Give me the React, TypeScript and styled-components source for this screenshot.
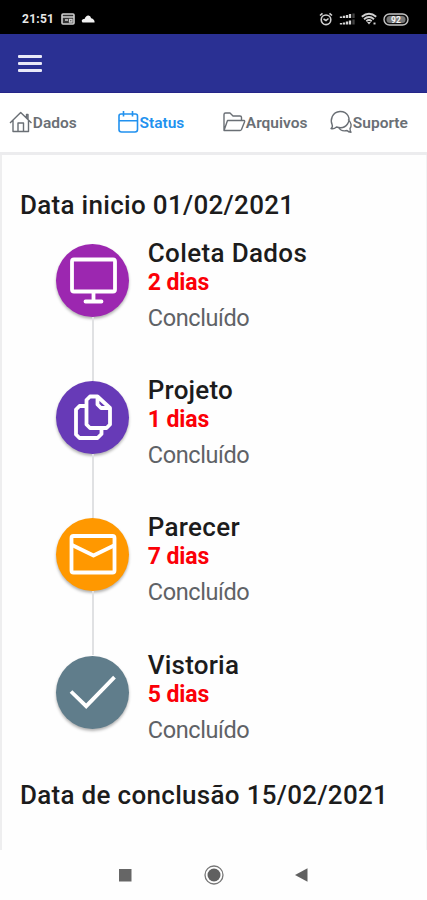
import React from "react";
import styled, { createGlobalStyle } from "styled-components";

const GlobalStyle = createGlobalStyle`
  * { box-sizing: border-box; }
  body { margin: 0; background: #fff; font-family: Roboto, "Liberation Sans", sans-serif; }
`;

const Screen = styled.div`
  width: 427px;
  height: 900px;
  display: flex;
  flex-direction: column;
  overflow: hidden;
  background: #fefefe;
`;

const StatusBar = styled.div`
  height: 34px;
  flex: none;
  background: #000;
  color: #e8e8e8;
  display: flex;
  align-items: center;
  justify-content: space-between;
  padding: 4px 18px 0 22px;
`;

const StatusGroup = styled.div<{ $gap: number }>`
  display: flex;
  align-items: center;
  gap: ${(p) => p.$gap}px;
`;

const Clock = styled.span`
  font-size: 12px;
  line-height: 14px;
  width: 32px;
  margin-right: 1px;
  letter-spacing: 0.25px;
  font-weight: 700;
`;

const AppBar = styled.header`
  height: 59px;
  flex: none;
  background: #2a3093;
  border-bottom: 1px solid #252588;
  display: flex;
  align-items: center;
  padding: 1px 0 0 18px;
`;

const MenuButton = styled.button`
  width: 24px;
  height: 17px;
  padding: 0;
  border: 0;
  background: none;
  display: flex;
  flex-direction: column;
  justify-content: space-between;
`;

const MenuLine = styled.span`
  display: block;
  width: 24px;
  height: 3px;
  border-radius: 1px;
  background: #e9e9f8;
`;

const Tabs = styled.nav`
  height: 62px;
  flex: none;
  display: grid;
  grid-template-columns: 108px 105px 107px 1fr;
  padding: 0 0 3px 9px;
  border-bottom: 3px solid #ececee;
  background: #fff;
`;

const Tab = styled.a<{ $active?: boolean }>`
  display: flex;
  align-items: center;
  height: 58px;
  font-size: 15.5px;
  font-weight: 600;
  color: ${(p) => (p.$active ? "#2191ef" : "#6a6f75")};
`;

const TabLabel = styled.span`
  padding-top: 1px;
  white-space: nowrap;
`;

const TabIcon = styled.svg<{ $pull: number }>`
  width: 24px;
  height: 24px;
  flex: none;
  margin-right: -${(p) => p.$pull}px;
  fill: none;
  stroke: currentColor;
  stroke-width: 1.4;
  stroke-linejoin: round;
`;

const Content = styled.main`
  height: 695px;
  flex: none;
  padding: 35px 0 0 18px;
  border-left: 2px solid #eeeeef;
  border-right: 1px solid #f3f3f4;
`;

const DateHeading = styled.h2`
  margin: 0;
  height: 30px;
  font-size: 26px;
  line-height: 30px;
  font-weight: 500;
  letter-spacing: 0.3px;
  color: #1c1c1c;
  white-space: nowrap;
`;

const Timeline = styled.ol`
  list-style: none;
  margin: 18px 0 0 35.6px;
  padding: 0;
  height: 542px;
`;

const Step = styled.li`
  height: 137.2px;
  display: flex;
  gap: 18.2px;
`;

const Rail = styled.div`
  width: 74px;
  padding-top: 6px;
  display: flex;
  flex-direction: column;
  align-items: center;
`;

const Badge = styled.div<{ $color: string }>`
  width: 73px;
  height: 73px;
  flex: none;
  border-radius: 50%;
  background: ${(p) => p.$color};
  box-shadow: 0 2px 3px rgba(0, 0, 0, 0.3);
  display: flex;
  align-items: center;
  justify-content: center;
`;

const Connector = styled.div`
  width: 2px;
  height: 64px;
  flex: none;
  background: #e0e1e3;
`;

const BadgeIcon = styled.svg`
  width: 54px;
  height: 54px;
  fill: none;
  stroke: #fff;
  stroke-width: 3.8;
  stroke-linejoin: round;
  stroke-linecap: round;
`;

const StepText = styled.div`
  white-space: nowrap;
`;

const StepTitle = styled.h3<{ $spacing: number }>`
  margin: 0;
  font-size: 26px;
  line-height: 30px;
  font-weight: 500;
  letter-spacing: ${(p) => p.$spacing}px;
  color: #1c1c1c;
`;

const Duration = styled.div`
  margin-top: 2px;
  font-size: 23px;
  line-height: 26px;
  font-weight: 700;
  letter-spacing: -0.1px;
  color: #fb0007;
`;

const State = styled.div`
  margin-top: 8px;
  font-size: 23.5px;
  line-height: 28px;
  letter-spacing: -0.4px;
  color: #5f6266;
`;

const NavBar = styled.footer`
  flex: 1;
  display: flex;
  align-items: center;
  padding: 0 0 1px 118px;
`;

const NavIcon = styled.svg<{ $gap: number }>`
  margin-right: ${(p) => p.$gap}px;
  flex: none;
`;

const MonitorGlyph = () => (
  <>
    <rect x="6" y="5.5" width="43" height="32" rx="2" />
    <path d="M27.5 38v9M19.5 47.5h16" />
  </>
);

const CopyGlyph = () => (
  <>
    <path d="M31.500 5.500h-7.500L20.500 9v24.500l3.500 3.500h16.500l3.500-3.500V17zM31.500 6v7.500l3.500 3.500h9" />
    <path d="M20 15h-6.500L10 18.500v25l3.500 3.500h18l4-4v-5" />
  </>
);

const MailGlyph = () => (
  <>
    <rect x="5.500" y="8" width="43" height="36.500" rx="2" />
    <path d="M6 17l21.500 10.500L49 17" strokeLinecap="butt" />
  </>
);

const CheckGlyph = () => <path d="M5 26.500l15.200 14.700L48.500 12.200" strokeLinejoin="miter" strokeLinecap="butt" />;

const steps = [
  { title: "Coleta Dados", days: "2 dias", color: "#9c27b0", spacing: 0.35, glyph: <MonitorGlyph /> },
  { title: "Projeto", days: "1 dias", color: "#673ab7", spacing: 0.2, glyph: <CopyGlyph /> },
  { title: "Parecer", days: "7 dias", color: "#ff9800", spacing: 0.3, glyph: <MailGlyph /> },
  { title: "Vistoria", days: "5 dias", color: "#607d8b", spacing: 0.2, glyph: <CheckGlyph /> },
];

const tabs = [
  {
    label: "Dados",
    pull: 0.2,
    icon: <path d="M1 13L11.700 2.500 22.500 13M4 10.500V21.500h15.500V10.500M17.500 8V4.500h1.500v5M9 21v-8h5.500v8" />,
  },
  {
    label: "Status",
    pull: 1.5,
    active: true,
    icon: <path strokeWidth="1.6" d="M4 4h14.500q2 0 2 2v13.500q0 2.500-2.500 2.500H4.500Q2 22 2 19.500V6q0-2 2-2zM2 10.700h18.500M6.500 1v5.500M15.500 1v5.500" />,
  },
  {
    label: "Arquivos",
    pull: 0.2,
    icon: <path d="M2 20V4.500q0-1.500 1.500-1.500h4.500l3 3h7q1.500 0 1.500 1.500V10M2 20.500L5.500 10.500H22q1 0 .5 1.500l-3 7.500q-.5 1-1.500 1z" />,
  },
  {
    label: "Suporte",
    pull: 0.2,
    icon: (
      <path d="M2 18.500c1.500-1 1.700-2 1.200-3.500C1 10 3 2 11 1.500c8-.2 11 7.500 7.500 12.500-3 4.500-8 4-11 3-2 1.700-3.500 2-5.500 1.500zM19 9.500c4 3 3.500 7 2 9 0 1.500 0 2.500 1 3.700-2 0-3-.5-4-1.700-4 1-7-.5-8.500-3" />
    ),
  },
];

export default function App() {
  return (
    <>
      <GlobalStyle />
      <Screen>
        <StatusBar>
          <StatusGroup $gap={6}>
            <Clock>21:51</Clock>
            <svg width="14" height="12" viewBox="0 0 14 12">
              <rect x="1" y="1" width="12" height="10" rx="1" fill="#333" stroke="#cfcfcf" strokeWidth="1.6" />
              <path d="M1 4h12M4 7h3M8.500 6.500h2.500v2.500h-2.500z" stroke="#cfcfcf" strokeWidth="1.3" fill="none" />
            </svg>
            <svg width="14" height="9" viewBox="0 0 14 9">
              <path d="M1.500 7.500Q-.5 5 2.500 4h1Q5 .2 7.500.5q2 .2 2.700 2.800Q14 4.500 13.500 7.500z" fill="#f2f2f2" />
            </svg>
          </StatusGroup>
          <StatusGroup $gap={6}>
            <svg width="14" height="14" viewBox="0 0 14 14" fill="none" stroke="#cfcfcf" strokeWidth="1.600">
              <circle cx="7" cy="7.800" r="4.800" />
              <path d="M1 3.500L3.500 1.300M13 3.500L10.500 1.300M4.500 7l2.500 1.500L9.500 6.500" />
            </svg>
            <svg width="16" height="14" viewBox="0 0 16 14" strokeWidth="2.300">
              <path d="M2 6V4.500M5 6V3.800M8 6V3M11 6V2M2 12.500V11M5 12.500V10.500M8 12.500V9.500M11 12.500V8.500" stroke="#d5d5d5" />
              <path d="M14.500 6V1.500M14.500 12.500V7.500" stroke="#444" />
            </svg>
            <svg width="16" height="14" viewBox="0 0 16 14" fill="none" stroke="#d0d0d0" strokeWidth="1.900">
              <path d="M.8 4.800Q8-1.200 15.200 4.800M3 7.200Q8 3 13 7.200M5.300 9.200Q8 7 10.700 9.200" />
              <path d="M6 10h4l-2 2.500z" fill="#d0d0d0" stroke="none" />
              <path d="M12.500 11.500h2" />
            </svg>
            <svg width="26" height="13" viewBox="0 0 26 13">
              <rect x="1" y="1" width="24" height="11" rx="5.500" fill="#111" stroke="#c4c4c4" strokeWidth="1.400" />
              <rect x="3.500" y="3" width="19" height="7" rx="3.500" fill="#777" />
              <text x="13" y="9.800" fontSize="8.500" fontWeight="700" textAnchor="middle" fill="#f5f5f5">92</text>
            </svg>
          </StatusGroup>
        </StatusBar>

        <AppBar>
          <MenuButton aria-label="Menu">
            <MenuLine />
            <MenuLine />
            <MenuLine />
          </MenuButton>
        </AppBar>

        <Tabs>
          {tabs.map((t) => (
            <Tab key={t.label} $active={t.active}>
              <TabIcon viewBox="0 0 24 24" $pull={t.pull}>{t.icon}</TabIcon>
              <TabLabel>{t.label}</TabLabel>
            </Tab>
          ))}
        </Tabs>

        <Content>
          <DateHeading>Data inicio 01/02/2021</DateHeading>
          <Timeline>
            {steps.map((s, i) => (
              <Step key={s.title}>
                <Rail>
                  <Badge $color={s.color}>
                    <BadgeIcon viewBox="0 0 54 54">{s.glyph}</BadgeIcon>
                  </Badge>
                  {i < steps.length - 1 && <Connector />}
                </Rail>
                <StepText>
                  <StepTitle $spacing={s.spacing}>{s.title}</StepTitle>
                  <Duration>{s.days}</Duration>
                  <State>Concluído</State>
                </StepText>
              </Step>
            ))}
          </Timeline>
          <DateHeading>Data de conclusão 15/02/2021</DateHeading>
        </Content>

        <NavBar>
          <NavIcon $gap={72} width="14" height="14" viewBox="0 0 14 14">
            <rect x="1" y="1" width="12.500" height="12.500" fill="#666" />
          </NavIcon>
          <NavIcon $gap={71} width="20" height="20" viewBox="0 0 20 20">
            <circle cx="10" cy="10" r="9" fill="none" stroke="#777" strokeWidth="1.300" />
            <circle cx="10" cy="10" r="6.500" fill="#606060" />
          </NavIcon>
          <NavIcon $gap={0} width="13" height="14" viewBox="0 0 13 14">
            <path d="M0 7L12.500.3v13.400z" fill="#606060" />
          </NavIcon>
        </NavBar>
      </Screen>
    </>
  );
}
